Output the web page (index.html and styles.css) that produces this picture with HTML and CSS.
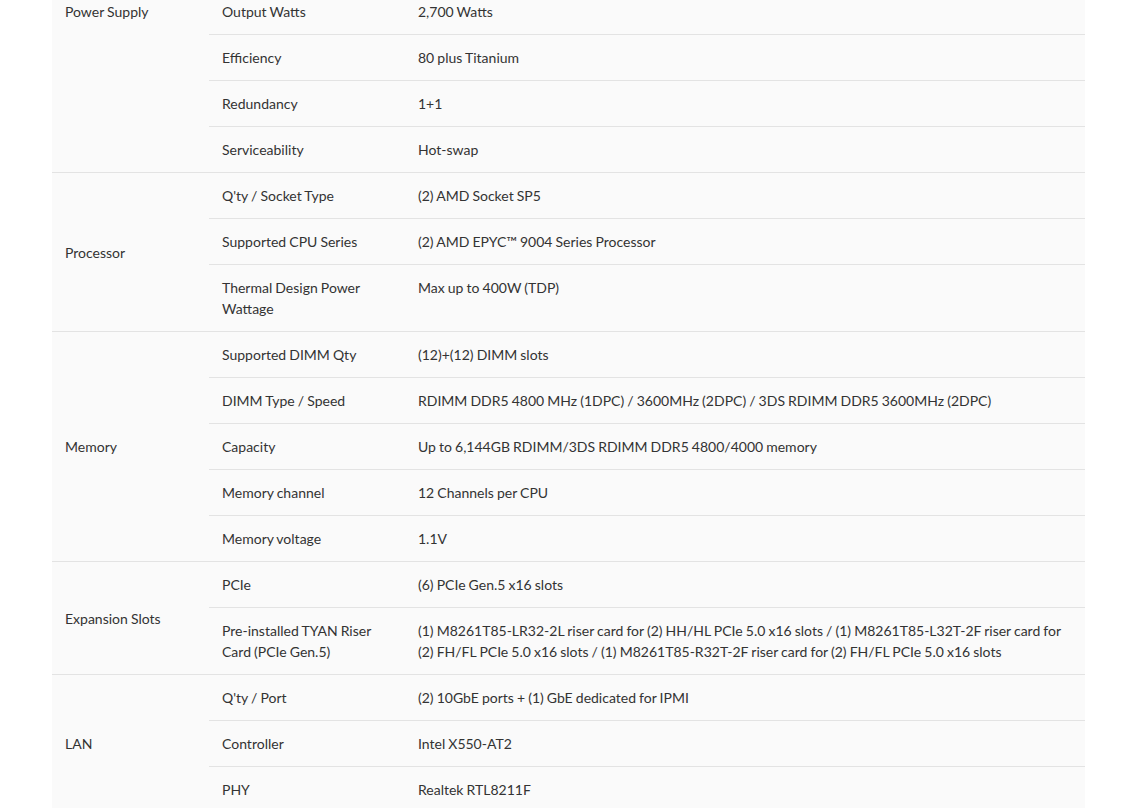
FILE: index.html
```html
<!DOCTYPE html>
<html lang="en">
<head>
  <meta charset="UTF-8">
  <meta name="viewport" content="width=device-width, initial-scale=1.0">
  <title>Specifications</title>
  <link rel="stylesheet" href="styles.css">
</head>
<body>

  <div class="container">
    <table class="spec-table">
      <tbody>
        <!-- Power Supply -->
        <tr>
          <td class="group group-top" rowspan="4">Power Supply</td>
          <td class="name">Output Watts</td>
          <td class="value">2,700 Watts</td>
        </tr>
        <tr>
          <td class="name">Efficiency</td>
          <td class="value">80 plus Titanium</td>
        </tr>
        <tr>
          <td class="name">Redundancy</td>
          <td class="value">1+1</td>
        </tr>
        <tr>
          <td class="name">Serviceability</td>
          <td class="value">Hot-swap</td>
        </tr>

        <!-- Processor -->
        <tr>
          <td class="group" rowspan="3">Processor</td>
          <td class="name">Q'ty / Socket Type</td>
          <td class="value">(2) AMD Socket SP5</td>
        </tr>
        <tr>
          <td class="name">Supported CPU Series</td>
          <td class="value">(2) AMD EPYC™ 9004 Series Processor</td>
        </tr>
        <tr>
          <td class="name">Thermal Design Power Wattage</td>
          <td class="value">Max up to 400W (TDP)</td>
        </tr>

        <!-- Memory -->
        <tr>
          <td class="group" rowspan="5">Memory</td>
          <td class="name">Supported DIMM Qty</td>
          <td class="value">(12)+(12) DIMM slots</td>
        </tr>
        <tr>
          <td class="name">DIMM Type / Speed</td>
          <td class="value">RDIMM DDR5 4800 MHz (1DPC) / 3600MHz (2DPC) / 3DS RDIMM DDR5 3600MHz (2DPC)</td>
        </tr>
        <tr>
          <td class="name">Capacity</td>
          <td class="value">Up to 6,144GB RDIMM/3DS RDIMM DDR5 4800/4000 memory</td>
        </tr>
        <tr>
          <td class="name">Memory channel</td>
          <td class="value">12 Channels per CPU</td>
        </tr>
        <tr>
          <td class="name">Memory voltage</td>
          <td class="value">1.1V</td>
        </tr>

        <!-- Expansion Slots -->
        <tr>
          <td class="group" rowspan="2">Expansion Slots</td>
          <td class="name">PCIe</td>
          <td class="value">(6) PCIe Gen.5 x16 slots</td>
        </tr>
        <tr>
          <td class="name">Pre-installed TYAN Riser Card (PCIe Gen.5)</td>
          <td class="value">(1) M8261T85-LR32-2L riser card for (2) HH/HL PCIe 5.0 x16 slots / (1) M8261T85-L32T-2F riser card for (2) FH/FL PCIe 5.0 x16 slots / (1) M8261T85-R32T-2F riser card for (2) FH/FL PCIe 5.0 x16 slots</td>
        </tr>

        <!-- LAN -->
        <tr>
          <td class="group" rowspan="3">LAN</td>
          <td class="name">Q'ty / Port</td>
          <td class="value">(2) 10GbE ports + (1) GbE dedicated for IPMI</td>
        </tr>
        <tr>
          <td class="name">Controller</td>
          <td class="value">Intel X550-AT2</td>
        </tr>
        <tr>
          <td class="name">PHY</td>
          <td class="value">Realtek RTL8211F</td>
        </tr>
      </tbody>
    </table>
  </div>

</body>
</html>
```

FILE: styles.css
```css
body {
  font-family: 'Lato', 'Open Sans', sans-serif;
  background-color: #ffffff;
  color: #333333;
  margin: 0;
  padding: 0;
  overflow: hidden;
}

.container {
  padding: 0 49px 0 52px;
  margin-top: -11px;
}

.spec-table {
  width: 100%;
  border-collapse: collapse;
  background-color: #fafafa;
  font-size: 14px;
  line-height: 21px;
  word-spacing: -0.5px;
  table-layout: fixed;
}

.spec-table td {
  padding: 12px 13px;
  border-bottom: 1px solid #e3e3e3;
  vertical-align: top;
  text-align: left;
}

.spec-table .group {
  width: 131px;
  vertical-align: middle;
}

.spec-table .group-top {
  vertical-align: top;
}

.spec-table .name {
  width: 170px;
}
```
